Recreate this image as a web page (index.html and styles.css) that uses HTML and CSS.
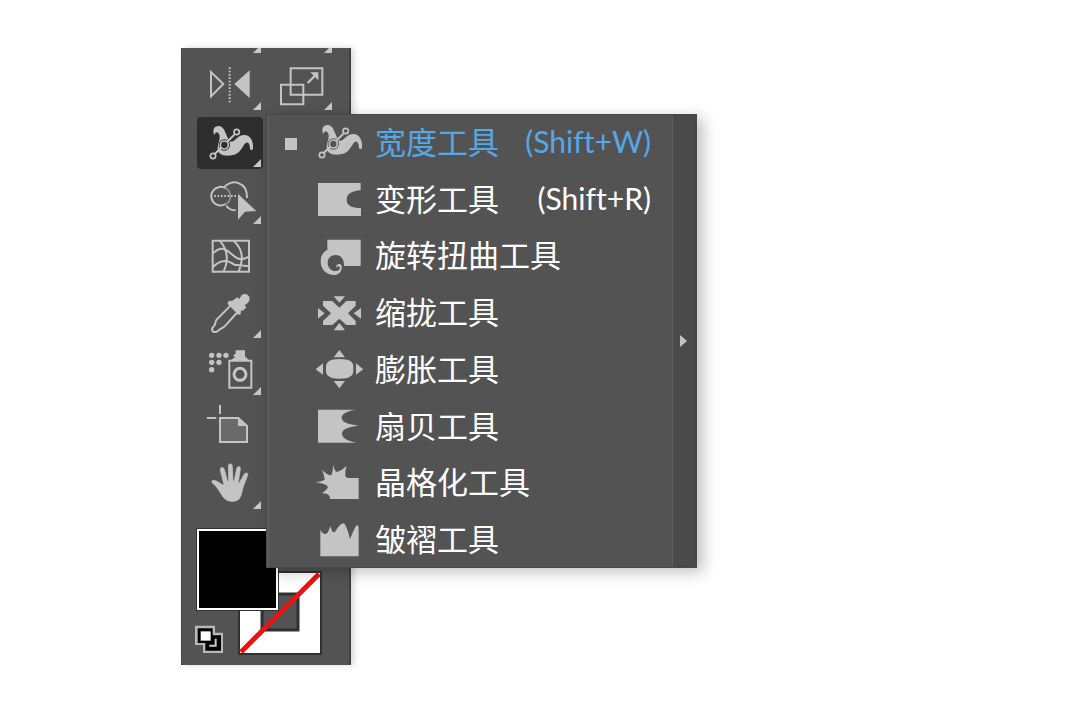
FILE: index.html
```html
<!DOCTYPE html>
<html lang="zh-CN">
<head>
<meta charset="utf-8">
<title>宽度工具</title>
<link rel="stylesheet" href="styles.css">
</head>
<body>
<main class="stage">
<div class="workspace">
  <div class="toolbar" role="toolbar" aria-label="工具栏">
    <div class="tool-row clipped">
      <button class="tool" aria-label="画笔"><i class="corner"></i></button>
      <button class="tool" aria-label="橡皮擦"><i class="corner"></i></button>
    </div>
    <div class="tool-row">
      <button class="tool" aria-label="镜像工具"><svg class="icon" viewBox="63 60 198 156"><path class="line" d="M105 96v73l37-37z"/><path class="line dots" d="M161 82v108"/><path d="M175 132l46-41v83z"/></svg><i class="corner"></i></button>
      <button class="tool" aria-label="比例缩放工具"><svg class="icon" viewBox="276 60 198 156"><path class="line" d="M344 85h95v79h-95zM315 134h67v59h-67z"/><path class="line thick" d="M395 129l24-24"/><path d="M403 97h24v24z"/></svg><i class="corner"></i></button>
    </div>
    <div class="tool-row">
      <button class="tool selected" aria-label="宽度工具"><svg class="icon" viewBox="63 231 198 156"><path d="M114 285C109 266 116 258 128 258C148 260 149 287 160 301C166 309 172 304 179 298C187 288 204 280 217 288C230 297 232 313 231 328Q227 332 222 328C222 313 217 303 209 309C199 318 193 344 166 346C139 350 124 340 125 323C126 307 134 297 130 284Q123 269 114 285z"/><path class="halo" d="M137 323l24-24"/><circle class="halo" cx="145" cy="315" r="12"/><path class="line" d="M117 341l58-57"/><circle class="node" cx="145" cy="315" r="12"/><circle class="node" cx="111" cy="348" r="8"/><circle class="node" cx="182" cy="276" r="8"/></svg><i class="corner"></i></button>
    </div>
    <div class="tool-row">
      <button class="tool" aria-label="形状生成器工具"><svg class="icon" viewBox="63 12 198 156"><path class="line" d="M143 53C166 24 215 35 213 84M151 107Q160 121 179 121M149 55A28 28 0 1 0 149 102"/><path class="line faint" d="M147 53Q163 62 163 79T148 104"/><path class="line dots" d="M115 78h66"/><path d="M186 72v77l21-24 34-2z"/></svg><i class="corner"></i></button>
    </div>
    <div class="tool-row">
      <button class="tool" aria-label="网格工具"><svg class="icon" viewBox="63 183 198 156"><path class="line" d="M110 212h109v93H110zM131 212C149 232 163 260 143 305M173 212C207 244 199 275 188 305M110 251C137 224 154 240 171 256S201 270 219 260M110 292C136 264 158 271 175 284T219 289"/></svg></button>
    </div>
    <div class="tool-row">
      <button class="tool" aria-label="吸管工具"><svg class="icon" viewBox="63 24 198 156"><path d="M177 57l7-5 6 5 7-12c10-8 25 0 24 12-1 9-7 14-15 18l5 7-8 9-8 1-1 10-6 3-34-34 4-8 11-1z"/><path class="line" d="M164 76l-42 43c-6 7-1 12-8 19-9 8-7 18 3 18 10 1 10-8 17-10 8-3 9-3 14-9l37-41"/></svg><i class="corner"></i></button>
    </div>
    <div class="tool-row">
      <button class="tool" aria-label="符号喷枪工具"><svg class="icon" viewBox="63 195 198 156"><g><circle cx="107" cy="226" r="8"/><circle cx="129" cy="226" r="8"/><circle cx="150" cy="226" r="8"/><circle cx="107" cy="247" r="8"/><circle cx="129" cy="247" r="8"/><circle cx="107" cy="269" r="8"/></g><path d="M179 211h28v18l12 12h-54l12-10-6-5 8-5z"/><path class="line" d="M160 242h66v81h-66z"/><circle class="line ring" cx="192" cy="283" r="18"/></svg><i class="corner"></i></button>
    </div>
    <div class="tool-row">
      <button class="tool" aria-label="画板工具"><svg class="icon" viewBox="63 21 198 156"><path class="line page" d="M132 69h55l26 24v48h-81z"/><path d="M186 69l28 24h-28z"/><path class="line" d="M132 30v27M93 69h28"/></svg></button>
    </div>
    <div class="tool-row">
      <button class="tool" aria-label="抓手工具"><svg class="icon" viewBox="63 192 198 156"><path class="hand" d="M108 263c-3-8 6-9 13-5l20 12c2 1 3-1 2-4l-10-40c-2-10 8-12 12-3l9 34c1 3 4 2 4-1l-1-42c0-10 12-10 12 0l2 42c0 3 3 3 4 0l7-35c2-9 13-8 11 2l-6 39c-1 3 1 4 3 1l15-26c4-6 13-3 10 4l-13 34c-4 11-4 25-12 36-10 11-32 11-44 0-11-10-17-32-38-48z"/></svg><i class="corner"></i></button>
    </div>
    <div class="swatches">
      <button class="swatch-fill" aria-label="填色"></button>
      <button class="swatch-stroke" aria-label="描边"><svg viewBox="0 0 84 84"><path class="frame" d="M1 1h82v82H1z"/><path class="hole" d="M24 23h36v36H24z"/><path class="slash" d="M3 81L81 3"/></svg></button>
      <button class="swatch-default" aria-label="默认填色和描边"><svg viewBox="63 285 123 135"><path class="back" d="M57 332h60v21h24v61H81v-24H57z"/><path class="ink" d="M65 340h45v21h25v46H88v-23H65z"/><path class="paper" d="M74 349h30v28H74z"/><path class="mark" d="M100 392h19v-21"/></svg></button>
    </div>
  </div>

  <div class="menu">
    <div class="menu-list" role="menu" aria-label="宽度工具组">
      <button class="item current" role="menuitem"><span class="marker"></span><svg class="item-icon" viewBox="87 240 156 138"><path d="M114 285C109 266 116 258 128 258C148 260 149 287 160 301C166 309 172 304 179 298C187 288 204 280 217 288C230 297 232 313 231 328Q227 332 222 328C222 313 217 303 209 309C199 318 193 344 166 346C139 350 124 340 125 323C126 307 134 297 130 284Q123 269 114 285z"/><path class="halo" d="M137 323l24-24"/><circle class="halo" cx="145" cy="315" r="12"/><path class="line" d="M117 341l58-57"/><circle class="node" cx="145" cy="315" r="12"/><circle class="node" cx="111" cy="348" r="8"/><circle class="node" cx="182" cy="276" r="8"/></svg><span class="name">宽度工具</span><kbd class="key">(Shift+W)</kbd></button>
      <button class="item" role="menuitem"><span class="marker"></span><svg class="item-icon" viewBox="144 213 156 138"><path d="M156 234h128v22C256 258 242 267 242 284S256 308 285 310v23H156z"/></svg><span class="name">变形工具</span><kbd class="key">(Shift+R)</kbd></button>
      <button class="item" role="menuitem"><span class="marker"></span><svg class="item-icon" viewBox="144 24 156 138"><path d="M184 44h100v79h-50c1-20-9-33-25-33-14 0-24 10-24 23 0 14 10 25 24 25 9 0 14-6 12-12-3-4-7-2-9 2-4-6 3-13 9-11 6 1 8 9 5 17-3 10-12 16-22 16-25 0-40-18-40-41 0-16 7-28 20-34z"/></svg><span class="name">旋转扭曲工具</span></button>
      <button class="item" role="menuitem"><span class="marker"></span><svg class="item-icon" viewBox="144 194 156 138"><path d="M171 227h28l21 20 21-20h28v14l-23 23 23 23v12h-28l-21-19-21 19h-28v-12l24-23-24-23zM203 213h34l-17 19zM203 315h34l-17-22zM156 248v32l20-16zM285 248v32l-22-16z"/></svg><span class="name">缩拢工具</span></button>
      <button class="item" role="menuitem"><span class="marker"></span><svg class="item-icon" viewBox="144 19 156 138"><path d="M198 60q23-4 46 0 18 5 18 20v15q-1 15-18 20-23 4-46 0-17-5-18-20V80q1-15 18-20zM220 31l17 22h-34zM220 146l17-22h-34zM149 89l22-18v34zM292 89l-22-18v34z"/></svg><span class="name">膨胀工具</span></button>
      <button class="item" role="menuitem"><span class="marker"></span><svg class="item-icon" viewBox="144 189 156 138"><path d="M156 209h114C241 213 227 222 227 233S240 252 279 257C242 260 228 270 228 281S241 302 272 308H156z"/></svg><span class="name">扇贝工具</span></button>
      <button class="item" role="menuitem"><span class="marker"></span><svg class="item-icon" viewBox="144 15 156 138"><path d="M201 29q4 18 12 22 14-4 29-18-6 16-4 31 3 5 9 5h31v63h-86q0-11-7-14-7-3-17-3 14-8 18-18-2-8-12-10l-25-6q20-2 27-7-1-14-8-30 14 16 27 17 6-8 6-32z"/></svg><span class="name">晶格化工具</span></button>
      <button class="item" role="menuitem"><span class="marker"></span><svg class="item-icon" viewBox="144 185 156 138"><path d="M163 224Q171 238 179 236T193 211Q198 231 203 231T212 222Q224 204 232 204T252 251Q262 226 270 211Q277 207 278 216V303H163z"/></svg><span class="name">皱褶工具</span></button>
    </div>
    <button class="tearoff" aria-label="拖出"><svg viewBox="0 0 7 12"><path d="M0 0l7 6-7 6z"/></svg></button>
  </div>
</div>
</main>
</body>
</html>
```
FILE: styles.css
```css
* { box-sizing: border-box; }
body { margin: 0; background: #fff; }
button {
  margin: 0;
  padding: 0;
  border: 0;
  background: none;
  color: inherit;
  font: inherit;
  text-align: left;
}
svg { display: block; overflow: visible; }

.stage { padding: 48px 0 48px 181px; }
.workspace { position: relative; width: max-content; }

.toolbar {
  display: flex;
  flex-direction: column;
  gap: 5px;
  padding: 0 17px 10px 16px;
  background: #535353;
  box-shadow: inset 1px 0 #444, inset -2px 0 #404040, 3px 0 6px rgba(0, 0, 0, .16);
}
.tool-row { display: flex; gap: 5px; }
.clipped { height: 7px; align-items: flex-end; overflow: hidden; }
.tool {
  position: relative;
  flex: none;
  width: 66px;
  height: 52px;
  border-radius: 4px;
  --ground: #535353;
}
.selected { background: #2e2e2e; --ground: #2e2e2e; }
.corner {
  position: absolute;
  right: 2px;
  bottom: 2px;
  width: 8px;
  height: 8px;
  background: #c8c8c8;
  clip-path: polygon(100% 0, 100% 100%, 0 100%);
}

.icon { width: 66px; height: 52px; fill: #c4c4c4; }
.item-icon { flex: none; width: 52px; height: 46px; fill: #c4c4c4; --ground: #535353; }
.line { fill: none; stroke: #c4c4c4; stroke-width: 6; }
.thick { stroke-width: 7; }
.ring { stroke-width: 9; }
.faint { stroke: #8c8c8c; }
.dots { stroke-dasharray: 5 5; }
.page { fill: #6a6a6a; }
.hand { stroke: #c4c4c4; stroke-width: 2; }
.node { fill: var(--ground); stroke: #c4c4c4; stroke-width: 5; }
.halo { fill: none; stroke: var(--ground); stroke-width: 10; }

.swatches {
  display: grid;
  grid-template-columns: 41px 40px 44px;
  grid-template-rows: 42px 39px 45px;
  margin-top: 13px;
}
.swatch-fill {
  z-index: 1;
  grid-area: 1 / 1 / 3 / 3;
  border: 2px solid #fff;
  background: #000;
  box-shadow: 0 0 0 1px #333;
}
.swatch-stroke { grid-area: 2 / 2 / 4 / 4; }
.swatch-default { grid-area: 3 / 1 / 4 / 2; z-index: 1; }
.frame { fill: #fff; stroke: #303030; stroke-width: 2; }
.hole { fill: #535353; stroke: #303030; stroke-width: 3; }
.slash { stroke: #f01010; stroke-width: 5; }
.back { fill: #b8b8b8; }
.ink { fill: #000; }
.paper { fill: #fff; }
.mark { fill: none; stroke: #ccc; stroke-width: 6; }

.menu {
  position: absolute;
  z-index: 2;
  top: 66px;
  left: 85px;
  display: flex;
  width: 431px;
  min-height: 454px;
  background: #535353;
  color: #fff;
  font-family: "Noto Sans CJK SC", sans-serif;
  font-size: 31px;
  line-height: 46px;
  box-shadow: inset 0 0 0 1px #484848, inset 3px 0 #5c5c5c, 6px 4px 14px rgba(0, 0, 0, .25);
}
.menu-list { display: flex; flex: 1; flex-direction: column; }
.item {
  display: flex;
  flex: 1;
  align-items: center;
  padding: 0 22px 0 19px;
  white-space: nowrap;
}
.marker { width: 12px; height: 12px; margin: 3px 17px 0 0; }
.current { color: #55a8e8; }
.current .marker { background: #c4c4c4; }
.name { margin-left: 9px; padding-bottom: 3px; }
.key {
  margin-left: auto;
  padding-bottom: 3px;
  font-family: Lato, sans-serif;
  font-size: 30px;
  font-variant-ligatures: none;
}
.tearoff {
  display: flex;
  align-items: center;
  justify-content: center;
  width: 23px;
  margin: 1px 1px 1px 0;
  border: solid #474747;
  border-width: 2px 2px 2px 0;
  background: #4a4a4a;
  box-shadow: -1px 0 #5c5c5c;
}
.tearoff svg { width: 7px; height: 12px; fill: #c4c4c4; }
```
